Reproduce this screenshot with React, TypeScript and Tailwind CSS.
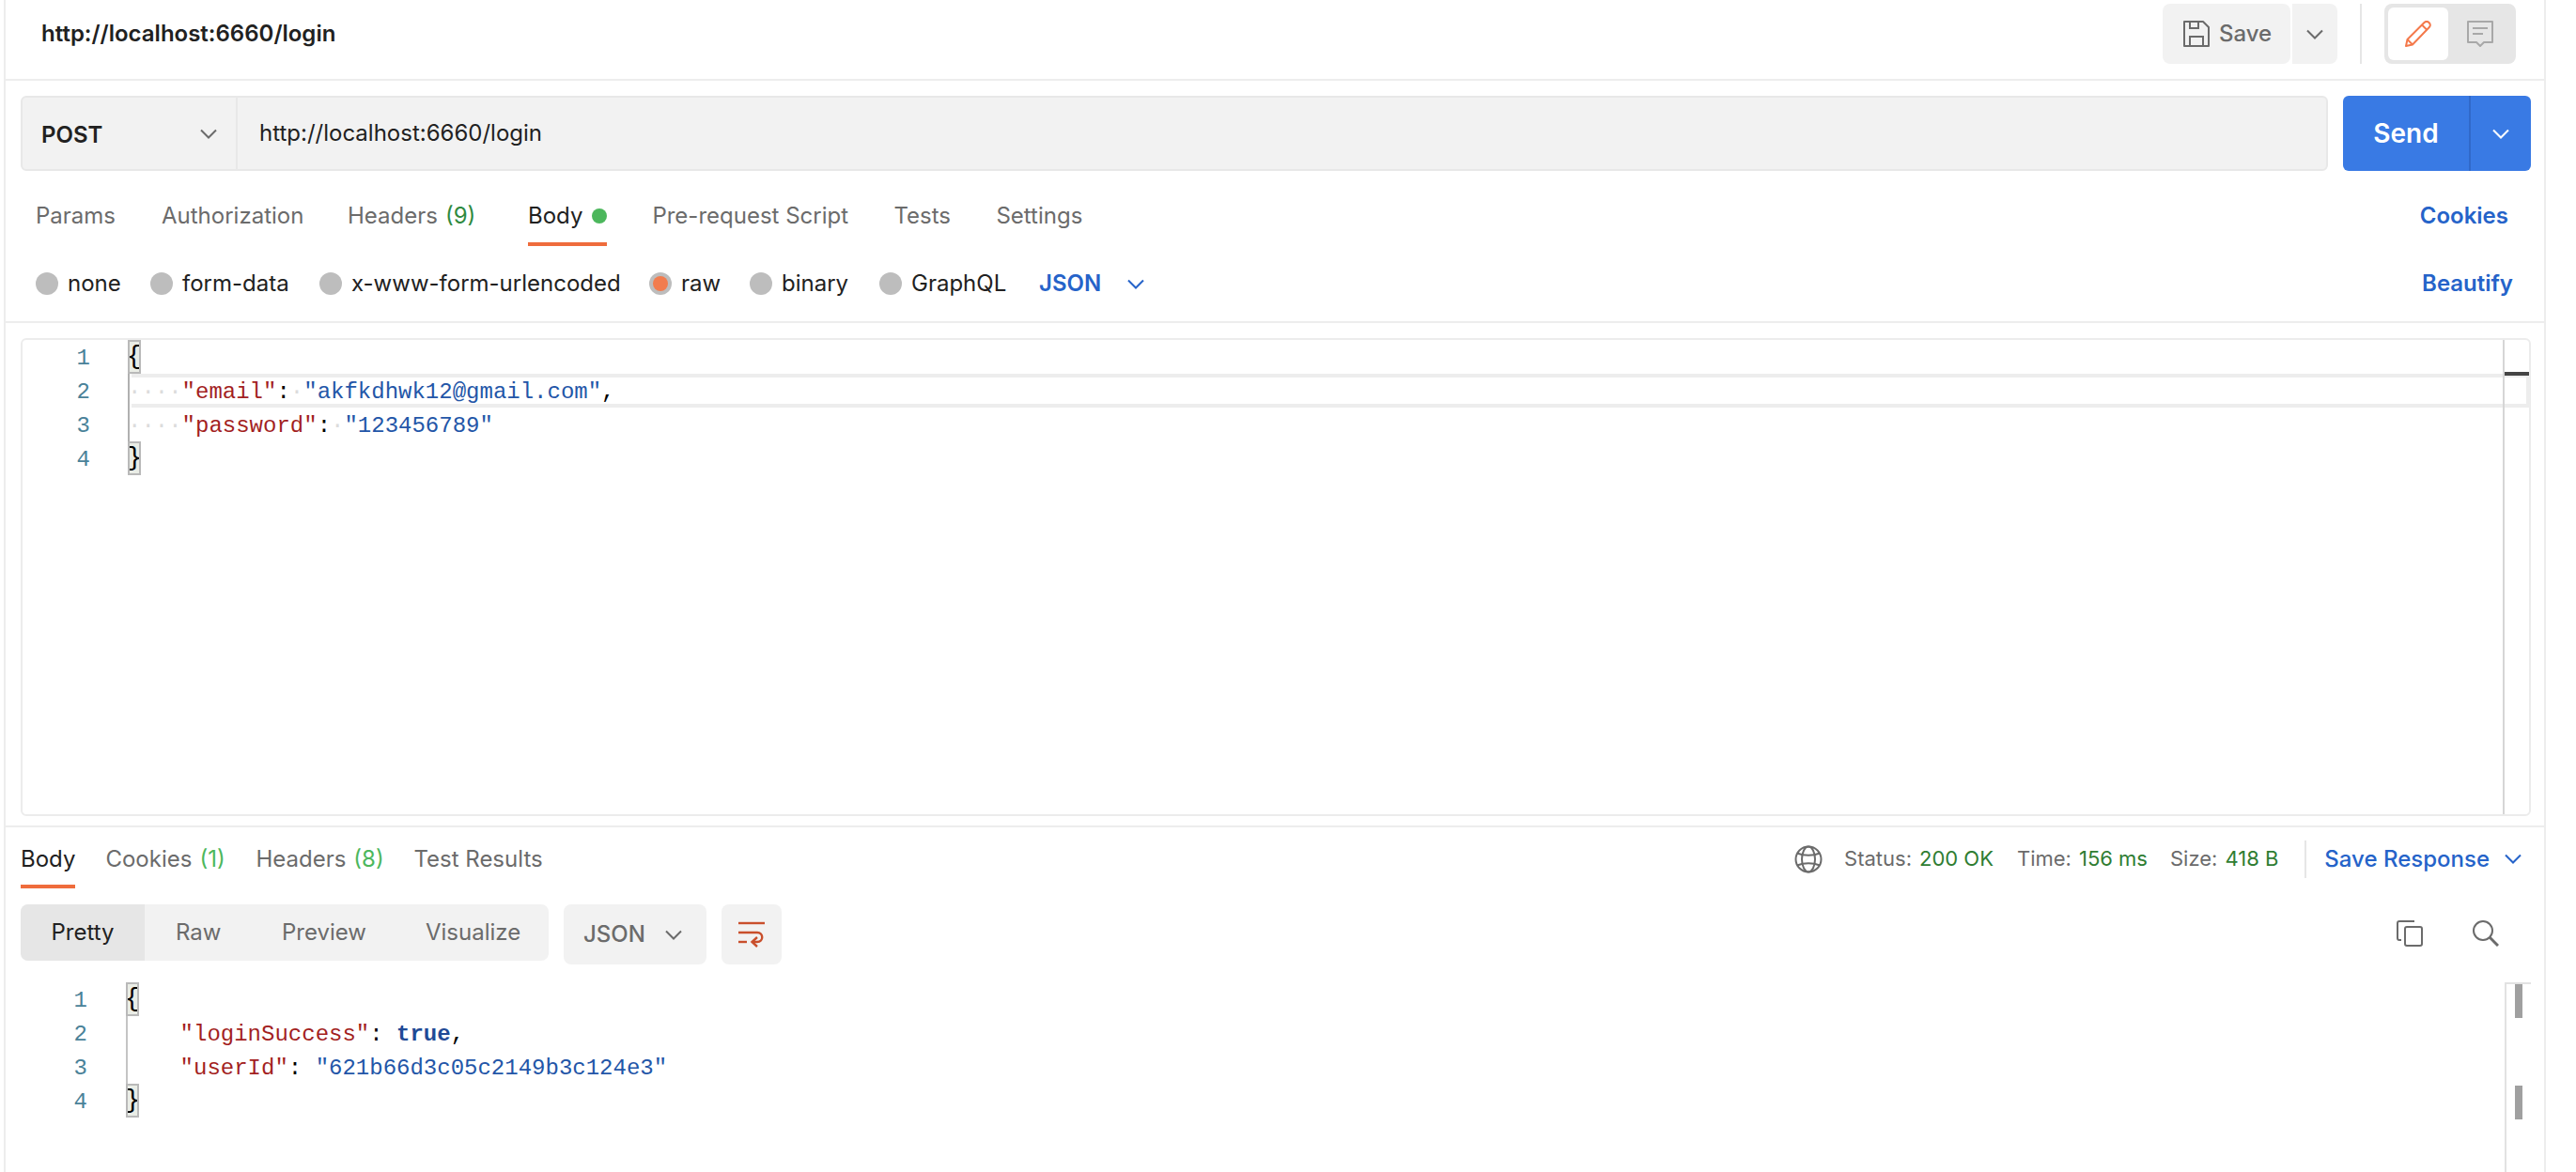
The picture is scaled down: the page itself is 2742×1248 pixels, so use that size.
import React from "react";

const Chevron = ({ w = 18, color = "#6b6b6b" }: { w?: number; color?: string }) => (
  <svg width={w} height={w / 2 + 2} viewBox="0 0 18 11" fill="none" stroke={color} strokeWidth={2}>
    <path d="M1 1.5 L9 9.5 L17 1.5" />
  </svg>
);

const Tab = ({ children, active, w, pt }: { children: React.ReactNode; active?: boolean; w?: string; pt: string }) => (
  <div className={`flex h-full items-center border-b-4 pb-[2px] ${pt} ${active ? "border-[#ef6c3c] text-[#212121]" : "border-transparent text-[#6b6b6b]"} ${w ?? ""}`}>
    {children}
  </div>
);

const Radio = ({ label, on, cls }: { label: string; on?: boolean; cls: string }) => (
  <div className={`flex items-center gap-[10px] ${cls}`}>
    <span className="flex h-[24px] w-[24px] items-center justify-center rounded-full bg-[#bdbdbd]">
      {on && <span className="h-[16px] w-[16px] rounded-full bg-[#f27c4e]" />}
    </span>
    <span className="text-[#212121]">{label}</span>
  </div>
);

const Brace = ({ ch }: { ch: string }) => (
  <span className="flex h-[36px] w-[14px] items-center justify-center overflow-hidden border-2 border-[#b9b9b9] bg-[#eaede6] text-[28px] font-light text-black">{ch}</span>
);

const K = ({ children }: { children: React.ReactNode }) => <span className="text-[#a31f1f]">{children}</span>;
const V = ({ children }: { children: React.ReactNode }) => <span className="text-[#2356a8]">{children}</span>;
const D = ({ children }: { children: React.ReactNode }) => <span className="text-[#dcdcdc]">{children}</span>;

const Num = ({ n }: { n: number }) => (
  <div className="flex h-[36px] items-center justify-end pt-[3px] text-[#4a8299]">{n}</div>
);

const mono = "font-['Liberation_Mono',monospace] text-[24px] whitespace-pre";

export default function App() {
  const topTab = "pt-[22px]";
  const botTab = "pt-[8px]";
  return (
    <div className="h-[1248px] w-[2742px] overflow-hidden bg-white font-['Inter',sans-serif] text-[24px]">
      <div className="ml-[4px] flex h-[1248px] w-[2706px] flex-col border-x-2 border-[#ededed]">
        {/* header */}
        <div className="flex h-[86px] shrink-0 items-start justify-between border-b-2 border-[#ededed] pl-[38px] pr-[30px]">
          <div className="mt-[18px] font-semibold leading-[36px] text-[#212121]">http://localhost:6660/login</div>
          <div className="mt-[4px] flex items-center">
            <div className="flex h-[64px] w-[136px] items-center gap-[10px] rounded-[8px] bg-[#f2f2f2] pl-[22px] font-medium text-[#6b6b6b]">
              <svg width="28" height="28" viewBox="0 0 28 28" fill="none" stroke="#6b6b6b" strokeWidth="2">
                <path d="M1 1H21L27 7V27H1Z" strokeLinejoin="round" />
                <path d="M7 1V8H16V1" />
                <path d="M7 27V17H21V27" />
              </svg>
              <span>Save</span>
            </div>
            <div className="ml-[2px] flex h-[64px] w-[48px] items-center justify-center rounded-r-[8px] bg-[#f2f2f2]">
              <Chevron />
            </div>
            <div className="ml-[24px] h-[64px] w-[2px] bg-[#e6e6e6]" />
            <div className="ml-[24px] flex h-[64px] w-[140px] items-center rounded-[8px] bg-[#e6e6e6] p-[4px]">
              <div className="flex h-[56px] w-[64px] items-center justify-center rounded-[6px] bg-white">
                <svg width="28" height="28" viewBox="0 0 28 28" fill="none" stroke="#f4794b" strokeWidth="2" strokeLinejoin="round">
                  <path d="M1 27L2.5 20L20.5 2C22 0.6 24 0.6 25.5 2C27.2 3.6 27.2 5.6 25.8 7L8 25.5Z" />
                  <path d="M18 4.5L23.5 10" />
                  <path d="M2.5 20L8 25.5" />
                </svg>
              </div>
              <div className="flex h-[56px] w-[68px] items-center justify-center">
                <svg width="28" height="28" viewBox="0 0 28 28" fill="none" stroke="#a8a8a8" strokeWidth="2" strokeLinejoin="round">
                  <path d="M1 1H27V23H18L14 27L10 23H1Z" />
                  <path d="M6 8H22" />
                  <path d="M6 14H17" />
                </svg>
              </div>
            </div>
          </div>
        </div>

        {/* url bar */}
        <div className="flex shrink-0 pl-[16px] pr-[14px] pt-[16px]">
          <div className="flex h-[80px] flex-1 rounded-[6px] border-2 border-[#e8e8e8] bg-[#f2f2f2]">
            <div className="flex w-[229px] items-center justify-between border-r-2 border-[#e8e8e8] pl-[20px] pr-[20px] font-semibold text-[#212121]">
              <span className="mt-[3px]">POST</span>
              <Chevron />
            </div>
            <div className="flex items-center pl-[23px] text-[#212121]">http://localhost:6660/login</div>
          </div>
          <div className="ml-[16px] flex h-[80px] w-[200px] rounded-[6px] bg-[#397ae4] text-white">
            <div className="flex w-[136px] items-center justify-center border-r-2 border-[#3069c9] text-[28px] font-semibold">Send</div>
            <div className="flex flex-1 items-center justify-center">
              <Chevron color="#ffffff" />
            </div>
          </div>
        </div>

        {/* request tabs */}
        <div className="flex h-[80px] shrink-0 items-center justify-between pl-[32px] pr-[38px]">
          <div className="flex h-full">
            <Tab pt={topTab} w="w-[134px]">Params</Tab>
            <Tab pt={topTab} w="w-[198px]">Authorization</Tab>
            <Tab pt={topTab} w="w-[192px]">
              Headers<span className="ml-[8px] text-[#2f8a3f]">(9)</span>
            </Tab>
            <Tab pt={topTab} active>
              Body<span className="ml-[10px] h-[16px] w-[16px] rounded-full bg-[#4cb75c]" />
            </Tab>
            <Tab pt={topTab} w="ml-[48px] w-[257px]">Pre-request Script</Tab>
            <Tab pt={topTab} w="w-[109px]">Tests</Tab>
            <Tab pt={topTab}>Settings</Tab>
          </div>
          <div className="mt-[16px] font-semibold text-[#2563c9]">Cookies</div>
        </div>

        {/* body types */}
        <div className="flex h-[82px] shrink-0 items-center justify-between border-b-2 border-[#ededed] pl-[32px] pr-[33px]">
          <div className="flex items-center">
            <Radio label="none" cls="w-[122px]" />
            <Radio label="form-data" cls="w-[180px]" />
            <Radio label="x-www-form-urlencoded" cls="w-[351px]" />
            <Radio label="raw" on cls="w-[107px]" />
            <Radio label="binary" cls="w-[138px]" />
            <Radio label="GraphQL" cls="w-[170px]" />
            <span className="font-semibold text-[#2563c9]">JSON</span>
            <span className="ml-[28px]">
              <Chevron color="#2563c9" />
            </span>
          </div>
          <div className="font-semibold text-[#2563c9]">Beautify</div>
        </div>

        {/* editor */}
        <div className="flex h-[537px] shrink-0 flex-col border-b-2 border-[#ededed] pb-[10px] pl-[16px] pr-[14px] pt-[16px]">
          <div className={`relative flex flex-1 rounded-[6px] border-2 border-[#ececec] ${mono}`}>
            <div className="w-[72px] shrink-0">
              {[1, 2, 3, 4].map((n) => (
                <Num key={n} n={n} />
              ))}
            </div>
            <div className="ml-[40px] flex-1">
              <div className="flex h-[36px] items-center">
                <Brace ch="{" />
              </div>
              <div className="relative flex h-[36px] items-center pt-[3px] text-black">
                <div className="absolute inset-y-0 left-[4px] right-[-1px] border-y-4 border-r-4 border-[#ededed]" />
                <div className="absolute inset-y-0 left-0 w-[2px] bg-[#b0b0b0]" />
                <span className="relative">
                  <D>····</D>
                  <K>"email"</K>:<D>·</D>
                  <V>"akfkdhwk12@gmail.com"</V>,
                </span>
              </div>
              <div className="relative flex h-[36px] items-center pt-[3px] text-black">
                <div className="absolute inset-y-0 left-0 w-[2px] bg-[#b0b0b0]" />
                <span>
                  <D>····</D>
                  <K>"password"</K>:<D>·</D>
                  <V>"123456789"</V>
                </span>
              </div>
              <div className="flex h-[36px] items-center">
                <Brace ch="}" />
              </div>
            </div>
            <div className="absolute inset-y-0 right-0 w-[28px] border-l-2 border-[#d6d6d6]">
              <div className="absolute left-0 right-0 top-[34px] h-[4px] bg-[#444444]" />
            </div>
          </div>
        </div>

        {/* response header */}
        <div className="flex h-[65px] shrink-0 items-center justify-between pl-[16px] pr-[24px]">
          <div className="flex h-full">
            <Tab pt={botTab} active>Body</Tab>
            <Tab pt={botTab} w="ml-[32px] w-[160px]">
              Cookies<span className="ml-[8px] text-[#4cb75c]">(1)</span>
            </Tab>
            <Tab pt={botTab} w="w-[168px]">
              Headers<span className="ml-[8px] text-[#4cb75c]">(8)</span>
            </Tab>
            <Tab pt={botTab}>Test Results</Tab>
          </div>
          <div className="flex items-center pt-[2px] text-[22px]">
            <svg width="30" height="30" viewBox="0 0 30 30" fill="none" stroke="#6b6b6b" strokeWidth="2">
              <circle cx="15" cy="15" r="13.5" />
              <ellipse cx="15" cy="15" rx="7" ry="13.5" />
              <path d="M3 8.5C10 11.5 20 11.5 27 8.5" />
              <path d="M3 21.5C10 18.5 20 18.5 27 21.5" />
            </svg>
            <span className="ml-[23px] text-[#6b6b6b]">Status:</span>
            <span className="ml-[8px] text-[#2f7d32]">200 OK</span>
            <span className="ml-[25px] text-[#6b6b6b]">Time:</span>
            <span className="ml-[8px] text-[#2f7d32]">156 ms</span>
            <span className="ml-[24px] text-[#6b6b6b]">Size:</span>
            <span className="ml-[8px] text-[#2f7d32]">418 B</span>
            <div className="ml-[28px] h-[40px] w-[2px] bg-[#e6e6e6]" />
            <span className="ml-[19px] text-[24px] font-medium text-[#2563c9]">Save Response</span>
            <span className="ml-[16px]">
              <Chevron color="#2563c9" />
            </span>
          </div>
        </div>

        {/* response toolbar */}
        <div className="flex shrink-0 items-start justify-between pl-[16px] pr-[48px] pt-[17px]">
          <div className="flex">
            <div className="flex h-[60px] w-[562px] rounded-[8px] bg-[#f2f2f2] text-[#6b6b6b]">
              <div className="flex w-[132px] items-center justify-center rounded-l-[8px] bg-[#e6e6e6] text-[#212121]">Pretty</div>
              <div className="ml-[33px] flex w-[113px] items-center">Raw</div>
              <div className="flex w-[153px] items-center">Preview</div>
              <div className="flex items-center">Visualize</div>
            </div>
            <div className="ml-[16px] flex h-[64px] w-[152px] items-center justify-between rounded-[8px] bg-[#f2f2f2] pl-[21px] pr-[26px] font-medium text-[#6b6b6b]">
              <span>JSON</span>
              <Chevron />
            </div>
            <div className="ml-[16px] flex h-[64px] w-[64px] items-center justify-center rounded-[8px] bg-[#f2f2f2]">
              <svg width="30" height="28" viewBox="0 0 30 28" fill="none" stroke="#c94f2c" strokeWidth="2.4">
                <path d="M1 2H29" />
                <path d="M1 12H21C28 12 28 22 21 22H16" />
                <path d="M21 17L15.5 22L21 27" />
                <path d="M1 22H10" />
              </svg>
            </div>
          </div>
          <div className="mt-[17px] flex items-center gap-[53px]">
            <svg width="28" height="28" viewBox="0 0 28 28" fill="none" stroke="#6b6b6b" strokeWidth="2" strokeLinejoin="round">
              <rect x="9" y="7" width="18" height="20" rx="2" />
              <path d="M5 21H3C2 21 1 20 1 19V3C1 2 2 1 3 1H19" />
            </svg>
            <svg width="28" height="28" viewBox="0 0 28 28" fill="none" stroke="#6b6b6b" strokeWidth="2">
              <circle cx="11" cy="11" r="10" />
              <path d="M18 18L27 27" strokeWidth="3" />
            </svg>
          </div>
        </div>

        {/* response code */}
        <div className={`relative mt-[19px] flex flex-1 ${mono}`}>
          <div className="w-[87px] shrink-0">
            {[1, 2, 3, 4].map((n) => (
              <Num key={n} n={n} />
            ))}
          </div>
          <div className="ml-[41px] flex-1">
            <div className="flex h-[36px] items-center">
              <Brace ch="{" />
            </div>
            <div className="relative flex h-[36px] items-center pt-[3px] text-black">
              <div className="absolute inset-y-0 left-0 w-[2px] bg-[#c4c4c4]" />
              <span>
                {"    "}
                <K>"loginSuccess"</K>: <span className="font-bold text-[#1f4a96]">true</span>,
              </span>
            </div>
            <div className="relative flex h-[36px] items-center pt-[3px] text-black">
              <div className="absolute inset-y-0 left-0 w-[2px] bg-[#c4c4c4]" />
              <span>
                {"    "}
                <K>"userId"</K>: <V>"621b66d3c05c2149b3c124e3"</V>
              </span>
            </div>
            <div className="flex h-[36px] items-center">
              <Brace ch="}" />
            </div>
          </div>
          <div className="absolute bottom-0 right-[14px] top-0 w-[28px] border-l-2 border-t-2 border-[#e2e2e2]">
            <div className="absolute left-[9px] top-0 h-[36px] w-[8px] bg-[#a0a0a0]" />
            <div className="absolute left-[9px] top-[108px] h-[36px] w-[8px] bg-[#a0a0a0]" />
          </div>
        </div>
      </div>
    </div>
  );
}
